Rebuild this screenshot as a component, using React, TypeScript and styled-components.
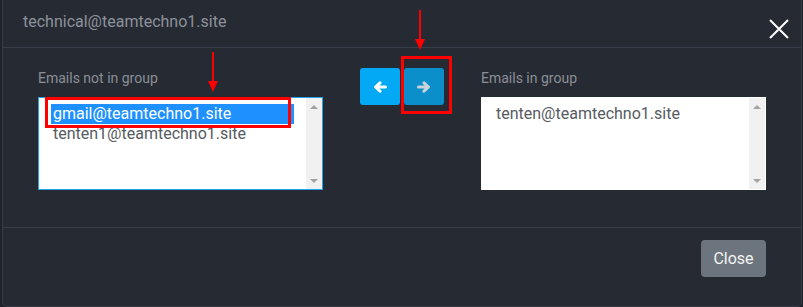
import React, { useState } from "react";
import styled, { createGlobalStyle } from "styled-components";

const GlobalStyle = createGlobalStyle`
  html, body {
    margin: 0;
    padding: 0;
    background: #1f232a;
    font-family: Roboto, "Liberation Sans", Arial, sans-serif;
  }
`;

const Page = styled.div`
  position: relative;
  width: 803px;
  height: 307px;
  overflow: hidden;
  padding-left: 2px;
  box-sizing: border-box;
`;

const Modal = styled.div`
  width: 800px;
  height: 308px;
  margin-top: -1px;
  box-sizing: border-box;
  background: #262a33;
  border: 1px solid #363b46;
  border-radius: 0 0 5px 5px;
  display: flex;
  flex-direction: column;
`;

const Header = styled.div`
  height: 48px;
  box-sizing: border-box;
  display: flex;
  justify-content: space-between;
  align-items: flex-start;
  padding: 10px 12px 0 20px;
  border-bottom: 1px solid #383d4a;
`;

const Title = styled.h5`
  margin: 0;
  font-size: 16px;
  line-height: 24px;
  font-weight: 400;
  color: #8d929b;
`;

const CloseX = styled.button`
  background: none;
  border: none;
  padding: 0;
  margin-top: 9px;
  width: 20px;
  height: 20px;
  cursor: pointer;
`;

const Body = styled.div`
  display: grid;
  grid-template-columns: 285px 1fr 285px;
  padding: 20px 35px 37px 35px;
  border-bottom: 1px solid #383d4a;
`;

const Column = styled.div`
  display: flex;
  flex-direction: column;
`;

const Label = styled.label`
  font-size: 14px;
  line-height: 20px;
  color: #8b8f96;
  margin-bottom: 9px;
`;

const ListBox = styled.div<{ $focused?: boolean }>`
  height: 93px;
  box-sizing: border-box;
  background: #fff;
  border: 1px solid ${(p) => (p.$focused ? "#1ea5ee" : "#ffffff")};
  display: flex;
`;

const Options = styled.div`
  flex: 1;
  padding: 6px 12px 0 12px;
`;

const Option = styled.div<{ $selected?: boolean }>`
  height: 20px;
  line-height: 20px;
  font-size: 16px;
  padding-left: 2px;
  color: ${(p) => (p.$selected ? "#ffffff" : "#555b61")};
  background: ${(p) => (p.$selected ? "#1e90ff" : "transparent")};
  cursor: default;
`;

const Scrollbar = styled.div`
  width: 16px;
  background: #f1f1f1;
  display: flex;
  flex-direction: column;
  justify-content: space-between;
  align-items: center;
  padding: 7px 0 6px;
`;

const Tri = styled.span<{ $down?: boolean }>`
  width: 0;
  height: 0;
  border-left: 4px solid transparent;
  border-right: 4px solid transparent;
  ${(p) =>
    p.$down
      ? "border-top: 4px solid #a3a3a3;"
      : "border-bottom: 4px solid #a3a3a3;"}
`;

const Middle = styled.div`
  display: flex;
  justify-content: center;
  align-items: flex-start;
  gap: 4px;
`;

const MoveButton = styled.button<{ $dark?: boolean }>`
  width: 40px;
  height: 37px;
  border: none;
  border-radius: 3px;
  display: flex;
  align-items: center;
  justify-content: center;
  background: ${(p) => (p.$dark ? "#0b8fcb" : "#03a9f4")};
  color: ${(p) => (p.$dark ? "#c9d3d8" : "#ffffff")};
  cursor: pointer;
`;

const Footer = styled.div`
  display: flex;
  justify-content: flex-end;
  padding: 12px 35px 0 0;
`;

const CloseButton = styled.button`
  width: 65px;
  height: 37px;
  border: none;
  border-radius: 4px;
  background: #6c757d;
  color: #f4f4f4;
  font-family: Roboto, "Liberation Sans", Arial, sans-serif;
  font-size: 16px;
  cursor: pointer;
`;

const RedBox = styled.div<{ $x: number; $y: number; $w: number; $h: number }>`
  position: absolute;
  left: ${(p) => p.$x}px;
  top: ${(p) => p.$y}px;
  width: ${(p) => p.$w}px;
  height: ${(p) => p.$h}px;
  box-sizing: border-box;
  border: 3px solid #ff0000;
  pointer-events: none;
`;

const RedArrow = styled.div<{ $x: number; $y: number; $len: number }>`
  position: absolute;
  left: ${(p) => p.$x - 1}px;
  top: ${(p) => p.$y}px;
  width: 2px;
  height: ${(p) => p.$len - 10}px;
  background: #ff0000;
  pointer-events: none;
  &::after {
    content: "";
    position: absolute;
    left: -4px;
    bottom: -10px;
    border-left: 5px solid transparent;
    border-right: 5px solid transparent;
    border-top: 11px solid #ff0000;
  }
`;

const XIcon = () => (
  <svg width="20" height="20" viewBox="0 0 20 20">
    <path d="M1 1 L19 19 M19 1 L1 19" stroke="#ffffff" strokeWidth="2" />
  </svg>
);

// thick arrow, points left unless flipped
const Arrow = ({ right }: { right?: boolean }) => (
  <svg
    width="14"
    height="12"
    viewBox="0 0 14 12"
    style={right ? { transform: "scaleX(-1)" } : undefined}
  >
    <path
      d="M12.5 6 H3 M7 1.8 L2.5 6 L7 10.2"
      fill="none"
      stroke="currentColor"
      strokeWidth="3"
      strokeLinecap="round"
      strokeLinejoin="round"
    />
  </svg>
);

export default function App() {
  const [selected] = useState("gmail@teamtechno1.site");
  const notInGroup = ["gmail@teamtechno1.site", "tenten1@teamtechno1.site"];
  const inGroup = ["tenten@teamtechno1.site"];

  return (
    <Page>
      <GlobalStyle />
      <Modal>
        <Header>
          <Title>technical@teamtechno1.site</Title>
          <CloseX aria-label="close">
            <XIcon />
          </CloseX>
        </Header>
        <Body>
          <Column>
            <Label>Emails not in group</Label>
            <ListBox $focused>
              <Options>
                {notInGroup.map((email) => (
                  <Option key={email} $selected={email === selected}>
                    {email}
                  </Option>
                ))}
              </Options>
              <Scrollbar>
                <Tri />
                <Tri $down />
              </Scrollbar>
            </ListBox>
          </Column>
          <Middle>
            <MoveButton>
              <Arrow />
            </MoveButton>
            <MoveButton $dark>
              <Arrow right />
            </MoveButton>
          </Middle>
          <Column>
            <Label>Emails in group</Label>
            <ListBox>
              <Options>
                {inGroup.map((email) => (
                  <Option key={email}>{email}</Option>
                ))}
              </Options>
              <Scrollbar>
                <Tri />
                <Tri $down />
              </Scrollbar>
            </ListBox>
          </Column>
        </Body>
        <Footer>
          <CloseButton>Close</CloseButton>
        </Footer>
      </Modal>
      <RedBox $x={45} $y={97} $w={246} $h={31} />
      <RedBox $x={401} $y={56} $w={51} $h={58} />
      <RedArrow $x={213} $y={52} $len={40} />
      <RedArrow $x={420} $y={10} $len={40} />
    </Page>
  );
}
